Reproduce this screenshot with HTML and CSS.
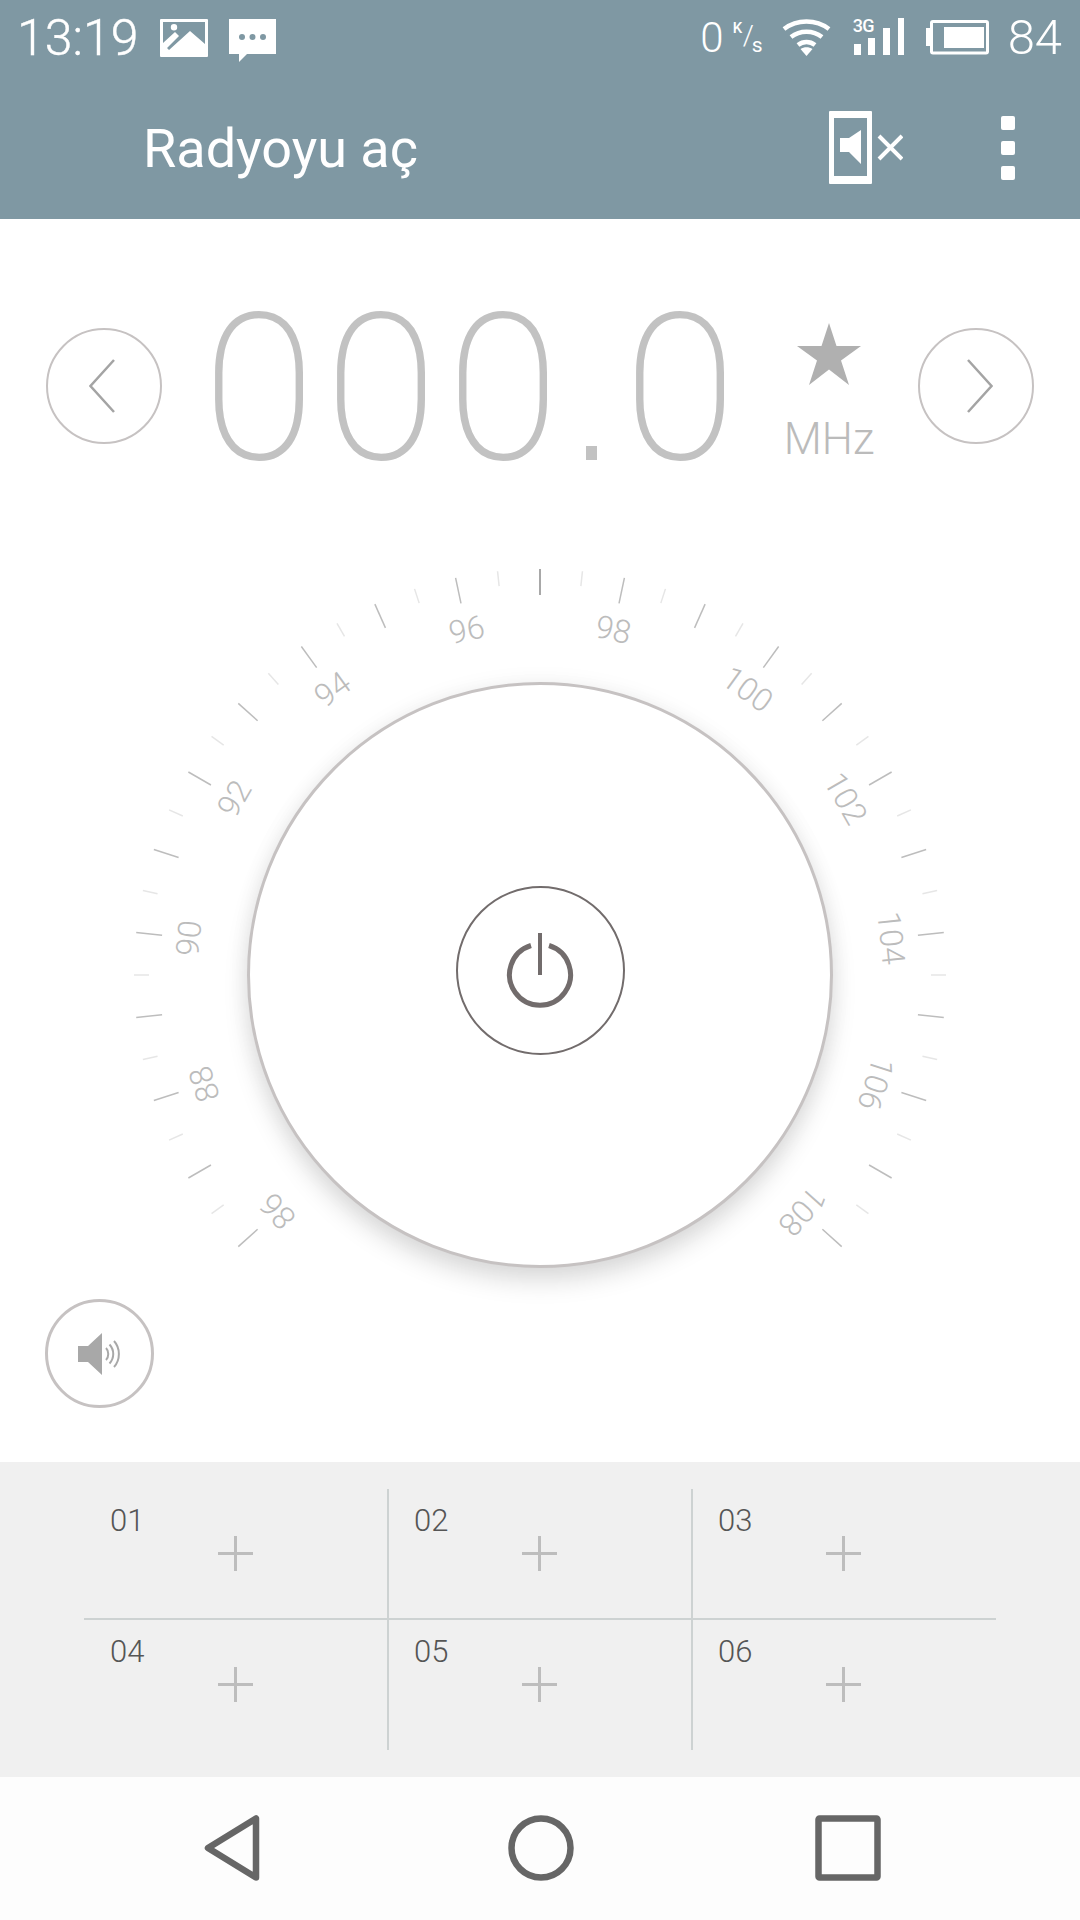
FILE: index.html
```html
<!DOCTYPE html>
<html lang="tr">
<head>
<meta charset="utf-8">
<title>Radyo</title>
<link rel="stylesheet" href="styles.css">
</head>
<body>
<div class="phone">

  <div class="topbar">
    <div class="status">
      <div class="status-left">
        <span class="clock">13:19</span>
        <svg class="ico-image" width="48" height="38" viewBox="0 0 48 38">
          <path fill="#fff" fill-rule="evenodd" d="M1 0H47a1 1 0 0 1 1 1V37a1 1 0 0 1-1 1H1a1 1 0 0 1-1-1V1a1 1 0 0 1 1-1ZM3 3V24L15 13l4 4-12 12 2 2L30 12l15 13V3ZM14 5a3.200 3.200 0 1 1 0 6.400a3.200 3.200 0 0 1 0-6.400Z"/>
        </svg>
        <svg class="ico-msg" width="47" height="44" viewBox="0 0 47 44">
          <path fill="#fff" d="M0 0H47V35H18L10 43V35H0Z"/>
          <circle cx="13" cy="18" r="3" fill="#7f98a3"/>
          <circle cx="23.500" cy="18" r="3" fill="#7f98a3"/>
          <circle cx="34" cy="18" r="3" fill="#7f98a3"/>
        </svg>
      </div>
      <div class="status-right">
        <span class="speed">0</span>
        <span class="speed-unit"><span class="unit-k">K</span><span class="unit-slash">/</span><span class="unit-s">s</span></span>
        <svg class="ico-wifi" width="49" height="38" viewBox="0 0 49 38" fill="none" stroke="#fff" stroke-width="4.500">
          <path d="M2 11C15 1 34 1 47 11"/>
          <path d="M9 19C18 12 31 12 40 19"/>
          <path d="M16 27C21 23 28 23 33 27"/>
          <path d="M18.500 31L24.500 38L30.500 31C27 28.500 22 28.500 18.500 31Z" fill="#fff" stroke="none"/>
        </svg>
        <div class="signal">
          <span class="net">3G</span>
          <svg width="52" height="38" viewBox="0 0 52 38">
            <rect x="1" y="27" width="7" height="11" fill="#fff"/>
            <rect x="15" y="21" width="7" height="17" fill="#fff"/>
            <rect x="30" y="11" width="7" height="27" fill="#fff"/>
            <rect x="45" y="1" width="6" height="37" fill="#fff"/>
          </svg>
        </div>
        <svg class="ico-battery" width="63" height="35" viewBox="0 0 63 35">
          <rect x="0" y="8" width="4" height="18" fill="#fff"/>
          <rect x="5.500" y="1.500" width="56" height="31.500" rx="1.500" fill="none" stroke="#fff" stroke-width="3"/>
          <rect x="18" y="7" width="40" height="21" fill="#fff"/>
        </svg>
        <span class="level">84</span>
      </div>
    </div>
    <div class="actionbar">
      <h1 class="title">Radyoyu aç</h1>
      <svg class="ico-mute" width="74" height="73" viewBox="0 0 74 73">
        <path fill="#fff" fill-rule="evenodd" d="M1 0H42a1 1 0 0 1 1 1V72a1 1 0 0 1-1 1H1a1 1 0 0 1-1-1V1a1 1 0 0 1 1-1ZM5 7V65H38V7Z"/>
        <path fill="#fff" d="M11 27H20L32 19V53L20 41H11Z"/>
        <path stroke="#fff" stroke-width="4" d="M50 25L73 48M73 25L50 48"/>
      </svg>
      <div class="dots"><i></i><i></i><i></i></div>
    </div>
  </div>

  <div class="tuner">
    <button class="round-btn step">
      <svg class="chev-prev" width="26" height="56" viewBox="0 0 26 56" fill="none" stroke="#a4a4a4" stroke-width="2.500"><path d="M25 2L1.500 28L25 54"/></svg>
    </button>
    <div class="freq">
      <span class="digit">0</span><span class="digit">0</span><span class="digit">0</span><i class="dot"></i><span class="digit">0</span>
    </div>
    <div class="fav">
      <svg width="64" height="62" viewBox="0 0 64 62"><path fill="#b0b0b0" d="M32 0L39.500 23H64L44 37.500L52 62L32 46.500L12 62L20 37.500L0 23H24.500Z"/></svg>
      <span class="mhz">MHz</span>
    </div>
    <button class="round-btn step">
      <svg class="chev-next" width="26" height="56" viewBox="0 0 26 56" fill="none" stroke="#a4a4a4" stroke-width="2.500"><path d="M1 2L24.500 28L1 54"/></svg>
    </button>
  </div>

  <div class="dial">
    <svg id="scale" width="1080" height="840" viewBox="0 0 1080 840"></svg>
    <div class="knob">
      <button class="power">
        <svg width="72" height="76" viewBox="0 0 72 76" fill="none" stroke="#726c6c">
          <path stroke-width="5" d="M27 12.500A30.500 30.500 0 1 0 45 12.500"/>
          <path stroke-width="4" d="M36 0V42"/>
        </svg>
      </button>
    </div>
    <button class="round-btn volume">
      <svg width="44" height="42" viewBox="0 0 44 42" fill="none">
        <path fill="#a8a8a8" d="M0 13H10L24 0V42L10 29H0Z"/>
        <path stroke="#a8a8a8" stroke-width="2" d="M28 15C31 18 31 24 28 27M31.500 11.500C36.500 17 36.500 25 31.500 30.500M36 8C42.500 15 42.500 27 36 34"/>
      </svg>
    </button>
  </div>

  <div class="presets">
    <div class="preset-grid">
      <div class="cell c-right c-bottom"><span class="num">01</span><i class="plus"></i></div>
      <div class="cell c-right c-bottom"><span class="num">02</span><i class="plus"></i></div>
      <div class="cell c-bottom"><span class="num">03</span><i class="plus"></i></div>
      <div class="cell c-right"><span class="num">04</span><i class="plus"></i></div>
      <div class="cell c-right"><span class="num">05</span><i class="plus"></i></div>
      <div class="cell"><span class="num">06</span><i class="plus"></i></div>
    </div>
  </div>

  <div class="navbar">
    <svg width="56" height="66" viewBox="0 0 56 66" fill="none" stroke="#666" stroke-width="6.500" stroke-linejoin="round"><path d="M52 3.500V62.500L4 33Z"/></svg>
    <svg class="nav-home" width="66" height="66" viewBox="0 0 66 66" fill="none" stroke="#666" stroke-width="6.500"><circle cx="33" cy="33" r="29.500"/></svg>
    <svg class="nav-recent" width="66" height="66" viewBox="0 0 66 66" fill="none" stroke="#666" stroke-width="6.500" stroke-linejoin="round"><rect x="3.500" y="3.500" width="59" height="59" rx="1"/></svg>
  </div>

</div>
<script src="script.js"></script>
</body>
</html>
```

FILE: styles.css
```css
* {
  box-sizing: border-box;
}

body {
  margin: 0;
  background: #fff;
  font-family: Roboto, "Liberation Sans", sans-serif;
}

button {
  padding: 0;
  background: none;
  cursor: pointer;
}

.phone {
  width: 1080px;
  height: 1920px;
  display: flex;
  flex-direction: column;
  overflow: hidden;
}

/* top */
.topbar {
  height: 219px;
  flex: none;
  background: #7f98a3;
  color: #fff;
}

.status {
  height: 76px;
  padding: 0 18px 0 17px;
  display: flex;
  justify-content: space-between;
}

.status-left,
.status-right {
  display: flex;
  align-items: flex-start;
}

.clock {
  font-size: 50px;
  font-weight: 300;
  line-height: 76px;
  height: 76px;
  -webkit-text-stroke: .4px #fff;
}

.ico-image {
  margin: 19px 0 0 22px;
}

.ico-msg {
  margin: 19px 0 0 21px;
}

.speed {
  font-size: 42px;
  font-weight: 300;
  line-height: 76px;
  height: 76px;
}

.level {
  margin-left: 19px;
  font-size: 49px;
  font-weight: 300;
  line-height: 76px;
  height: 76px;
}

.speed-unit {
  position: relative;
  width: 30px;
  height: 40px;
  margin: 18px 0 0 9px;
}

.speed-unit span {
  position: absolute;
}

.unit-k {
  left: 0;
  top: 3px;
  font-size: 15px;
  font-weight: 500;
  line-height: 15px;
}

.unit-slash {
  left: 10px;
  top: 3px;
  font-size: 28px;
  line-height: 30px;
  font-weight: 300;
}

.unit-s {
  left: 19px;
  top: 16px;
  font-size: 21px;
  line-height: 22px;
}

.ico-wifi {
  margin: 18px 0 0 19px;
}

.signal {
  position: relative;
  margin: 17px 0 0 22px;
}

.signal svg {
  display: block;
}

.net {
  position: absolute;
  left: 0;
  top: 0;
  font-size: 18px;
  font-weight: 500;
  line-height: 17px;
  letter-spacing: -.5px;
}

.ico-battery {
  margin: 20px 0 0 21px;
}

.actionbar {
  height: 143px;
  display: flex;
  align-items: flex-start;
}

.title {
  margin: 0 0 0 143px;
  font-size: 54px;
  font-weight: 400;
  line-height: 76px;
  padding-top: 35px;
  width: 686px;
}

.ico-mute {
  margin-top: 35px;
}

.dots {
  margin: 40px 0 0 98px;
  display: flex;
  flex-direction: column;
  gap: 11px;
}

.dots i {
  width: 14px;
  height: 14px;
  background: #fff;
  border-radius: 2px;
}

/* frequency row */
.tuner {
  height: 333px;
  flex: none;
  padding: 109px 47px 0 46px;
  display: flex;
  align-items: flex-start;
}

.round-btn {
  width: 116px;
  height: 116px;
  flex: none;
  border: 2px solid #c6c2c2;
  border-radius: 50%;
  display: flex;
  align-items: center;
  justify-content: center;
}

.chev-prev {
  margin-right: 5px;
}

.chev-next {
  margin-left: 7px;
}

.freq {
  width: 543px;
  height: 150px;
  margin: -14px 0 0 36px;
  flex: none;
  display: flex;
  color: #c2c2c2;
  font-size: 202px;
  font-weight: 100;
  line-height: 150px;
}

.digit {
  width: 122px;
  display: block;
  text-align: center;
  -webkit-text-stroke: 2px #c2c2c2;
}

.dot {
  width: 11px;
  height: 14px;
  margin: 132px 22px 0;
  background: #c2c2c2;
}

.fav {
  width: 100px;
  margin: -5px 0 0 38px;
  flex: none;
  display: flex;
  flex-direction: column;
  align-items: center;
}

.mhz {
  margin-top: 28px;
  color: #bbb;
  font-size: 44px;
  font-weight: 300;
  line-height: 52px;
}

.fav + .step {
  margin-left: 39px;
}

/* dial */
.dial {
  position: relative;
  height: 910px;
  flex: none;
}

#scale {
  display: block;
}

.tick-major {
  stroke: #bdbdbd;
  stroke-width: 1.500;
}

.tick-minor {
  stroke: #e6e6e6;
  stroke-width: 1.500;
}

.tick-zero {
  stroke: #a8a8a8;
  stroke-width: 2;
}

.scale-label {
  fill: #bcbcbc;
  font-family: Roboto, "Liberation Sans", sans-serif;
  font-size: 32px;
  font-weight: 300;
  text-anchor: middle;
  dominant-baseline: central;
}

.knob {
  position: absolute;
  left: 247px;
  top: 130px;
  width: 586px;
  height: 586px;
  border: 3px solid #c6c2c2;
  border-radius: 50%;
  background: #fff;
  box-shadow: 0 14px 24px rgba(0, 0, 0, .13), 0 0 22px rgba(0, 0, 0, .05);
  display: flex;
  justify-content: center;
}

.power {
  width: 169px;
  height: 169px;
  margin-top: 201px;
  border: 2px solid #726c6c;
  border-radius: 50%;
  display: flex;
  align-items: center;
  justify-content: center;
}

.volume {
  position: absolute;
  left: 45px;
  top: 747px;
  width: 109px;
  height: 109px;
  border-width: 3px;
}

/* presets */
.presets {
  height: 315px;
  flex: none;
  padding: 27px 84px 0;
  background: #f0f0f0;
}

.preset-grid {
  display: grid;
  grid-template-columns: 305px 304px 303px;
  grid-template-rows: 131px 130px;
}

.cell {
  position: relative;
  padding: 12px 0 0 26px;
}

.cell:not(:nth-child(3n+1)) {
  padding-left: 25px;
}

.cell:not(:nth-child(3n+1)) .plus {
  left: 133px;
}

.c-right {
  border-right: 2px solid #cdd2d2;
}

.c-bottom {
  border-bottom: 2px solid #cdd2d2;
}

.num {
  color: #555;
  font-size: 31px;
  font-weight: 300;
  line-height: 40px;
}

.plus {
  position: absolute;
  left: 134px;
  top: 47px;
  width: 35px;
  height: 35px;
  background:
    linear-gradient(#bdbdbd, #bdbdbd) center / 35px 3px no-repeat,
    linear-gradient(#bdbdbd, #bdbdbd) center / 3px 35px no-repeat;
}

/* nav */
.navbar {
  flex: 1;
  background: #fdfdfd;
  padding: 38px 0 0 204px;
  display: flex;
  align-items: flex-start;
}

.nav-home {
  margin-left: 248px;
}

.nav-recent {
  margin-left: 241px;
}
```

FILE: script.js
```js
// dial scale, 6 degrees per tick from -132 to 132
var svg = document.getElementById("scale");
var ns = "http://www.w3.org/2000/svg";
var cx = 540, cy = 423;
var freq = 86;

for (var a = -132; a <= 132; a += 6) {
  var major = (a + 132) % 12 == 0;
  var line = document.createElementNS(ns, "line");
  line.setAttribute("x1", cx);
  line.setAttribute("x2", cx);
  line.setAttribute("y1", cy - 406);
  line.setAttribute("y2", cy - (major ? 380 : 391));
  line.setAttribute("transform", "rotate(" + a + " " + cx + " " + cy + ")");
  line.setAttribute("class", a == 0 ? "tick-zero" : major ? "tick-major" : "tick-minor");
  svg.appendChild(line);
}

for (var b = -132; b <= 132; b += 24) {
  var label = document.createElementNS(ns, "text");
  label.setAttribute("x", cx);
  label.setAttribute("y", cy - 353);
  label.setAttribute("transform", "rotate(" + b + " " + cx + " " + cy + ")");
  label.setAttribute("class", "scale-label");
  label.textContent = freq;
  svg.appendChild(label);
  freq += 2;
}
```
